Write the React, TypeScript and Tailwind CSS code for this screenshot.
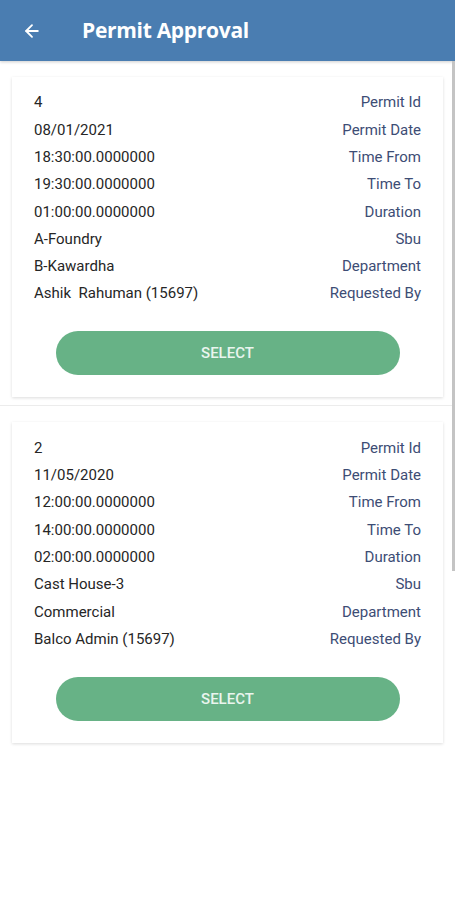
import { ArrowLeft } from "lucide-react";

type Permit = {
  id: string;
  date: string;
  from: string;
  to: string;
  duration: string;
  sbu: string;
  dept: string;
  by: string;
};

const permits: Permit[] = [
  {
    id: "4",
    date: "08/01/2021",
    from: "18:30:00.0000000",
    to: "19:30:00.0000000",
    duration: "01:00:00.0000000",
    sbu: "A-Foundry",
    dept: "B-Kawardha",
    by: "Ashik  Rahuman (15697)",
  },
  {
    id: "2",
    date: "11/05/2020",
    from: "12:00:00.0000000",
    to: "14:00:00.0000000",
    duration: "02:00:00.0000000",
    sbu: "Cast House-3",
    dept: "Commercial",
    by: "Balco Admin (15697)",
  },
];

function Row({ value, label }: { value: string; label: string }) {
  return (
    <div className="flex items-center justify-between h-[27.3px]">
      <span className="text-[#262626] whitespace-pre">{value}</span>
      <span className="text-[#3d4d75]">{label}</span>
    </div>
  );
}

function PermitCard({ p, last }: { p: Permit; last: boolean }) {
  return (
    <div className={"px-3 pt-4 pb-[8px] " + (last ? "" : "border-b border-[#ececec]")}>
      <div className="bg-white shadow-[0_1px_3px_rgba(0,0,0,0.14)] px-[22px] pt-[12px] pb-[22px]">
        <Row value={p.id} label="Permit Id" />
        <Row value={p.date} label="Permit Date" />
        <Row value={p.from} label="Time From" />
        <Row value={p.to} label="Time To" />
        <Row value={p.duration} label="Duration" />
        <Row value={p.sbu} label="Sbu" />
        <Row value={p.dept} label="Department" />
        <Row value={p.by} label="Requested By" />
        <div className="mt-[24px] flex justify-center">
          <button className="w-[344px] h-[44px] rounded-full bg-[#67b286] text-[#eaf5ee] text-[15px] font-medium">
            SELECT
          </button>
        </div>
      </div>
    </div>
  );
}

export default function App() {
  return (
    <div className="relative w-[455px] h-[900px] bg-white overflow-hidden text-[15px] font-['Roboto',sans-serif]">
      <div className="h-[61px] bg-[#4a7db1] flex items-center px-[22px] shadow-[0_1px_3px_rgba(0,0,0,0.2)]">
        <ArrowLeft className="text-white" size={20} strokeWidth={2.2} />
        <span className="ml-[40px] text-white text-[21px] font-bold font-['Open_Sans',sans-serif] tracking-[-0.3px]">
          Permit Approval
        </span>
      </div>
      {permits.map((p, i) => (
        <PermitCard key={p.id} p={p} last={i === permits.length - 1} />
      ))}
      <div className="absolute right-0 top-[61px] w-[3px] h-[510px] bg-[#c4c4c4]" />
    </div>
  );
}
